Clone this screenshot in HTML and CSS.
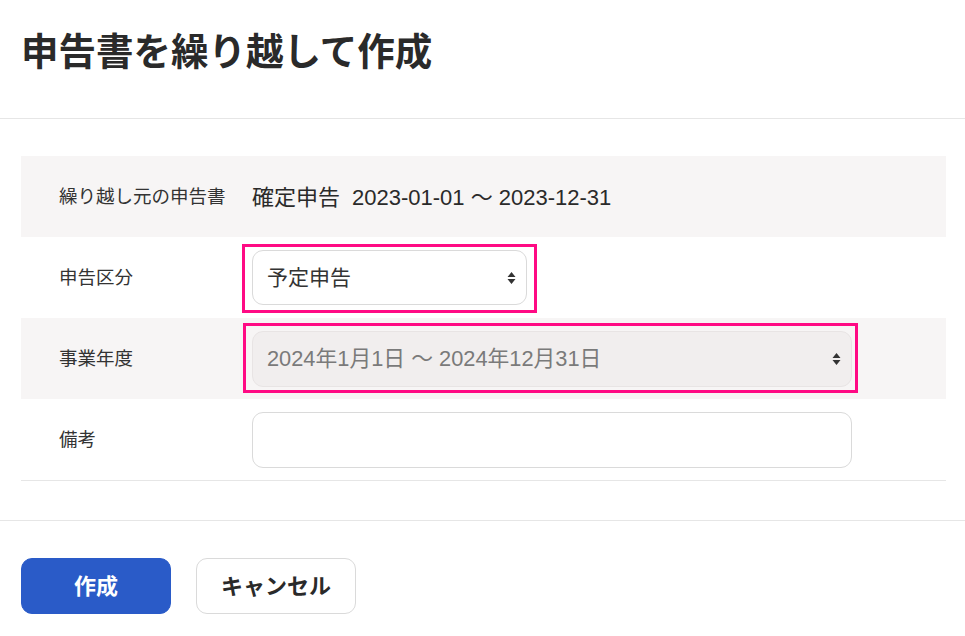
FILE: index.html
```html
<!DOCTYPE html>
<html lang="ja">
<head>
<meta charset="utf-8">
<title>申告書を繰り越して作成</title>
<link rel="stylesheet" href="styles.css">
</head>
<body>
<header class="page-header">
  <h1 class="title">申告書を繰り越して作成</h1>
</header>
<main class="form">
  <div class="row shaded">
    <div class="label">繰り越し元の申告書</div>
    <div class="value text"><span class="kind">確定申告</span><span>2023-01-01 〜 2023-12-31</span></div>
  </div>
  <div class="row">
    <div class="label">申告区分</div>
    <div class="value">
      <div class="hl hl-a">
        <div class="select short">
          <span class="opt">予定申告</span>
          <svg class="arrows" width="9" height="14" viewBox="0 0 9 14"><path d="M4.5 1 L8.5 6 L0.5 6 Z M4.5 13 L8.5 8 L0.5 8 Z" fill="#333"/></svg>
        </div>
      </div>
    </div>
  </div>
  <div class="row shaded">
    <div class="label">事業年度</div>
    <div class="value">
      <div class="hl hl-b">
        <div class="select wide disabled">
          <span class="opt">2024年1月1日 〜 2024年12月31日</span>
          <svg class="arrows" width="9" height="14" viewBox="0 0 9 14"><path d="M4.5 1 L8.5 6 L0.5 6 Z M4.5 13 L8.5 8 L0.5 8 Z" fill="#333"/></svg>
        </div>
      </div>
    </div>
  </div>
  <div class="row last">
    <div class="label">備考</div>
    <div class="value">
      <div class="input wide"></div>
    </div>
  </div>
</main>
<footer class="actions">
  <button class="btn primary">作成</button>
  <button class="btn secondary">キャンセル</button>
</footer>
</body>
</html>
```

FILE: styles.css
```css
* { box-sizing: border-box; }
body {
  margin: 0;
  font-family: "Liberation Sans", "Noto Sans CJK JP", sans-serif;
  color: #323232;
  background: #fff;
}
.page-header {
  height: 119px;
  padding: 30px 21px 0;
  border-bottom: 1px solid #e6e6e6;
}
.title {
  margin: 0;
  font-family: "Noto Sans CJK JP", sans-serif;
  font-size: 37.5px;
  line-height: 38px;
  font-weight: 700;
  color: #2a2a2a;
}
.form {
  padding: 37px 19px 0 21px;
}
.row {
  display: grid;
  grid-template-columns: 231px 1fr;
  align-items: center;
  height: 81px;
}
.row.shaded { background: #f7f5f5; }
.row.last { height: 82px; border-bottom: 1px solid #e6e6e6; }
.label {
  padding-left: 38px;
  padding-bottom: 4px;
  font-size: 18.5px;
  color: #333;
}
.value {
  font-size: 22px;
  color: #2a2a2a;
  display: flex;
  align-items: center;
}
.value.text { padding-bottom: 4px; }
.kind { margin-right: 12px; }
.hl { position: relative; }
.hl::after {
  content: "";
  position: absolute;
  border: 3px solid #ff0a84;
  pointer-events: none;
}
.hl-a::after { left: -10px; right: -10px; top: -6px; bottom: -8px; }
.hl-b::after { left: -9px; right: -6px; top: -8px; bottom: -6px; }
.select, .input {
  height: 56px;
  border: 1px solid #dadada;
  border-radius: 11px;
  background: #fff;
}
.select {
  display: flex;
  align-items: center;
  justify-content: space-between;
  padding: 0 10px 0 14px;
  font-size: 21px;
  color: #333;
}
.opt { padding-bottom: 4px; }
.select.short { width: 275px; height: 55px; }
.wide { width: 600px; }
.select.disabled {
  background: #f1eeee;
  border-color: #e8e4e4;
  color: #7a7a7a;
  font-size: 21.8px;
}
.arrows { display: block; }
.actions {
  margin-top: 39px;
  border-top: 1px solid #e6e6e6;
  padding: 37px 21px 0;
  display: flex;
  gap: 25px;
}
.btn {
  height: 56px;
  padding: 0 0 4px;
  border-radius: 11px;
  font-family: "Noto Sans CJK JP", sans-serif;
  font-size: 22px;
  font-weight: 700;
  cursor: pointer;
}
.btn.primary {
  width: 150px;
  background: #2a5bc8;
  border: 1px solid #2a5bc8;
  color: #fff;
}
.btn.secondary {
  width: 160px;
  background: #fff;
  border: 1px solid #dadada;
  color: #2a2a2a;
}
```
